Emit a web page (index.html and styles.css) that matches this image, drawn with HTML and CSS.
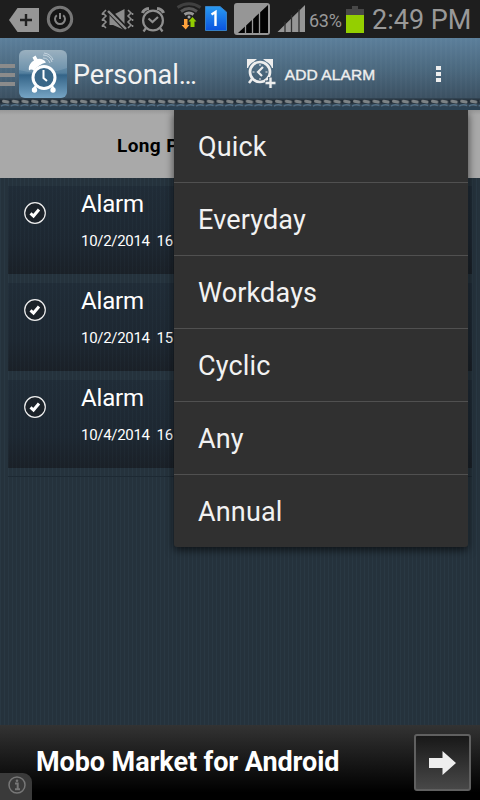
FILE: index.html
```html
<!DOCTYPE html>
<html lang="en">
<head>
<meta charset="utf-8">
<title>Personal Alarm</title>
<link rel="stylesheet" href="styles.css">
</head>
<body>
<div class="screen">
  <header class="status">
    <svg class="status-icons" width="308" height="38" viewBox="0 0 308 38">
      <path d="M9 20L17.500 8H39V32H17.500Z" fill="#969696"/>
      <path d="M20 20H32M26 14V26" stroke="#222" stroke-width="2.400"/>
      <circle cx="60" cy="19" r="11.700" fill="#151515" stroke="#777" stroke-width="3"/>
      <path d="M56.800 15.200A5 5 0 1 0 63.200 15.200M60 13V19" fill="none" stroke="#858585" stroke-width="2"/>
      <path d="M109.500 15H113L124.500 9V30L113 25H109.500Z" fill="#8c8c8c"/>
      <path d="M107 9L127 30" stroke="#1e1e1e" stroke-width="5"/>
      <path d="M108 11L126 29" stroke="#8c8c8c" stroke-width="2.400"/>
      <path d="M106 10L103 13L106 16L103 19L106 22L103 25L106 28M128 10L131 13L128 16L131 19L128 22L131 25L128 28M102.500 13V15M102.500 19V21M102.500 25V27M132.500 13V15M132.500 19V21M132.500 25V27" fill="none" stroke="#8c8c8c" stroke-width="1.600"/>
      <g fill="none" stroke="#8f8f8f" stroke-width="2.200">
        <circle cx="153" cy="20.500" r="9.900"/>
        <path d="M148.500 18.500L152.500 22L158 17M146 28L143.500 31.500M160 28L162.500 31.500"/>
        <path d="M142.500 13Q144 9 149 8.500M163.500 13Q162 9 157 8.500" stroke-width="3.200"/>
      </g>
      <g fill="none" stroke-width="3">
        <path d="M177.500 7.500Q189 0 200.500 7.500" stroke="#404040"/>
        <path d="M181 11.500Q189 5.500 197 11.500" stroke="#555"/>
        <path d="M184.500 14.500Q189 11.500 193.500 14.500" stroke="#969696"/>
      </g>
      <circle cx="189" cy="17" r="1.500" fill="#a5a5a5"/>
      <path d="M184 19H187.500V25H189.500L185.700 29.500L181.500 25H184Z" fill="#ffa23b"/>
      <path d="M190.500 27V21.500H188.500L192.500 17L196.500 21.500H194.500V27Z" fill="#92cc00"/>
      <defs><linearGradient id="sim" x2="0" y2="1"><stop stop-color="#299af0"/><stop offset="1" stop-color="#0a53e0"/></linearGradient></defs>
      <path d="M205.500 6.500H220L226.500 12V30.500H205.500Z" fill="url(#sim)" stroke="#367fc4"/>
      <path d="M211.500 14.500L215.500 12V26" fill="none" stroke="#fff" stroke-width="2.400"/>
      <rect x="234" y="3" width="36" height="32" rx="3" fill="#969696"/>
      <path d="M238 33L268 5V33Z" fill="#030303"/>
      <path d="M245.500 23V33M252.500 17V33M259.500 12V33" stroke="#999" stroke-width="1.300"/>
      <path d="M277.500 32L305 5V32Z" fill="#969696"/>
      <path d="M285 22V32M291.500 15V32M299 9V32" stroke="#303030" stroke-width="1.300"/>
    </svg>
    <span class="percent">63%</span>
    <svg class="battery" width="18" height="27" viewBox="0 0 18 27"><path d="M0 3H6V0H12V3H18V9H0Z" fill="#484848"/><path d="M0 9H18V27H0Z" fill="#94cf00"/></svg>
    <span class="clock">2:49 PM</span>
  </header>

  <div class="appbar">
    <div class="bar-main">
      <span class="drawer"><i></i><i></i><i></i></span>
      <svg class="logo" width="48" height="48" viewBox="0 0 48 48">
        <defs><linearGradient id="logo" x2="0" y2="1"><stop stop-color="#8da6b7"/><stop offset=".48" stop-color="#54809f"/><stop offset=".52" stop-color="#346488"/><stop offset="1" stop-color="#76a4c4"/></linearGradient></defs>
        <rect width="48" height="48" rx="6" fill="url(#logo)"/>
        <path d="M0 20Q24 27 48 18V6Q48 0 42 0H6Q0 0 0 6Z" fill="#fff" opacity=".12"/>
        <circle cx="25" cy="27.500" r="11" fill="#3a6788" stroke="#fff" stroke-width="3"/>
        <path d="M24.500 20V28L28 31" fill="none" stroke="#fff" stroke-width="2"/>
        <path d="M10 20.500C9 16 12 12 15 10.500L13.500 7.500L16.500 5.500L18.500 9Q24 8 27 12.500Q19 14.500 15 21Q12.500 18.500 10 20.500Z" fill="#fff"/>
        <circle cx="15.500" cy="40" r="2.700" fill="#fff"/><circle cx="34" cy="40" r="2.700" fill="#fff"/>
        <path d="M17 36L14 40M33 36L35 40" stroke="#fff" stroke-width="2.500"/>
        <path d="M24 8Q29 8 31 13M24 5Q31 5 33 12M25 3Q32 4 34 10" fill="none" stroke="#c5d4df" stroke-width="1"/>
      </svg>
      <h1 class="title">Personal…</h1>
      <button class="add">
        <svg width="30" height="31" viewBox="0 0 30 31" fill="none" stroke="#eee">
          <circle cx="14" cy="14" r="10" stroke-width="2.700"/>
          <path d="M17 9L12 14L16 18" stroke-width="2.200"/>
          <path d="M14 6V8M6.500 14H8.500M19.500 14H21.500M14 20V22" stroke-width="1"/>
          <path d="M1 1H11L8 3.500Q3.500 5.500 2 10H1ZM27 1H17L20 3.500Q24.500 5.500 26 10H27Z" fill="#eee" stroke="none"/>
          <path d="M6 21L3 25" stroke-width="2.500"/>
          <path d="M24.500 19V30M19 25H30" stroke="#4b6376" stroke-width="5"/>
          <path d="M24.500 19.500V30M19.500 25H29.500" stroke-width="2.400"/>
        </svg>
        <span>ADD ALARM</span>
      </button>
      <span class="overflow"><i></i><i></i><i></i></span>
    </div>
    <svg class="stitch" width="480" height="12">
      <defs><pattern id="thread" width="9.75" height="12" patternUnits="userSpaceOnUse">
        <rect width="9.75" height="12" fill="#314250"/>
        <path d="M0 3.500H9.750" stroke="#222d37" stroke-width="4"/>
        <path d="M3.500 3.200L7.800 4" fill="none" stroke="#7d8386" stroke-width="3" stroke-linecap="round"/>
        <path d="M1 8.200Q4 5.800 9 7.500" fill="none" stroke="#537087" stroke-width="1.500"/>
        <path d="M0 10.500H9.750" stroke="#2b4254" stroke-width="3"/>
      </pattern></defs>
      <rect width="480" height="12" fill="url(#thread)"/>
    </svg>
  </div>

  <main class="content">
    <div class="hint">Long P</div>
    <ul class="alarms">
      <li class="alarm"><svg class="check" width="22" height="22" viewBox="0 0 22 22"><circle cx="11" cy="11" r="10.300"/><path d="M6.500 11.300L9.500 14L15 7.500"/></svg><div><h2>Alarm</h2><p>10/2/2014&nbsp; 16</p></div></li>
      <li class="alarm"><svg class="check" width="22" height="22" viewBox="0 0 22 22"><circle cx="11" cy="11" r="10.300"/><path d="M6.500 11.300L9.500 14L15 7.500"/></svg><div><h2>Alarm</h2><p>10/2/2014&nbsp; 15</p></div></li>
      <li class="alarm"><svg class="check" width="22" height="22" viewBox="0 0 22 22"><circle cx="11" cy="11" r="10.300"/><path d="M6.500 11.300L9.500 14L15 7.500"/></svg><div><h2>Alarm</h2><p>10/4/2014&nbsp; 16</p></div></li>
    </ul>
    <div class="list-end"></div>
    <nav class="menu">
      <a>Quick</a><a>Everyday</a><a>Workdays</a><a>Cyclic</a><a>Any</a><a>Annual</a>
    </nav>
  </main>

  <footer class="ad">
    <strong>Mobo Market for Android</strong>
    <span class="go"><svg width="27" height="24" viewBox="0 0 27 24"><path d="M0 7H13.500V0L27 12L13.500 24V17H0Z" fill="#eee"/></svg></span>
    <span class="info"><svg width="18" height="18" viewBox="0 0 18 18"><circle cx="9" cy="9" r="8" fill="none" stroke="#777" stroke-width="1.500"/><path d="M7 7.500H9.700V13M7 13.300H12" fill="none" stroke="#777" stroke-width="2"/><circle cx="9" cy="4.700" r="1.300" fill="#777"/></svg></span>
  </footer>
</div>
</body>
</html>
```

FILE: styles.css
```css
* { box-sizing: border-box; }
body { margin: 0; font-family: Roboto, sans-serif; }
h1, h2, p, ul { margin: 0; padding: 0; font-weight: 400; }
.screen { width: 480px; height: 800px; display: flex; flex-direction: column; overflow: hidden; background: #24323d; }

.status { height: 38px; flex: none; display: flex; align-items: center; background: #1e1e1e; color: #999; white-space: nowrap; }
.status-icons { flex: none; }
.percent { width: 38px; padding: 2px 0 0 1px; font-size: 18px; letter-spacing: -.3px; }
.battery { flex: none; }
.clock { padding-left: 8px; font-size: 27px; letter-spacing: 0; padding-top: 1px; }

.appbar { height: 72px; flex: none; display: flex; flex-direction: column; border-bottom: 1px solid #71828d;
  background: repeating-linear-gradient(90deg, rgba(255,255,255,.018) 0 2px, transparent 2px 5px), linear-gradient(#5c7f9b, #4b687e 45%, #3b5061 85%, #2b4254); }
.bar-main { height: 60px; flex: none; display: flex; align-items: center; padding-top: 12px; }
.drawer { width: 15px; display: grid; gap: 5px; margin-top: 2px; }
.drawer i { height: 4px; background: #8b8b8b; }
.logo { margin-left: 4px; flex: none; }
.title { width: 172px; padding: 1px 0 0 6px; font-size: 27px; line-height: 48px; color: #f2f2f2; }
.add { display: flex; align-items: center; gap: 8px; margin-left: 7px; padding: 0; border: 0; background: none; font: 15.5px "Liberation Sans", sans-serif; color: #eee; white-space: nowrap; -webkit-text-stroke: .4px #eee; }
.add svg { margin-top: -1px; }
.add span { width: 92px; padding-top: 1px; letter-spacing: .1px; }
.overflow { display: grid; gap: 2px; margin-left: 60px; }
.overflow i { width: 5px; height: 4px; background: #eee; }
.stitch { display: block; flex: none; }

.content { position: relative; flex: 1; background: repeating-linear-gradient(90deg, rgba(90,130,150,.08) 0 1px, transparent 1px 4px), #25323c; }
.hint { height: 68px; padding-left: 117px; background: linear-gradient(#989898, #a9a9a9 5px, #a9a9a9); color: #000; font-size: 19px; font-weight: 700; line-height: 71px; letter-spacing: .4px; }
.alarms { display: grid; gap: 9px; padding: 8px 8px 0; list-style: none; }
.alarm { height: 88px; display: flex; color: #fff; background: repeating-linear-gradient(90deg, rgba(90,130,150,.05) 0 1px, transparent 1px 4px), linear-gradient(#202c37, #1d2731 65%, #1a2027); }
.check { flex: none; margin: 16px 35px 0 16px; fill: #1b2229; stroke: #eee; stroke-width: 1.200; }
.check path { fill: none; stroke: #fff; stroke-width: 3; }
.alarm h2 { padding-top: 3px; font-size: 24px; line-height: 30px; letter-spacing: -.15px; }
.alarm p { margin-top: 12px; font-size: 15px; line-height: 20px; letter-spacing: -.3px; }
.list-end { height: 1px; margin: 8px 8px 0; background: #1d2933; }
.menu { position: absolute; top: 0; left: 174px; width: 294px; height: 437px; background: #303030; border-radius: 0 0 3px 3px; box-shadow: 0 3px 8px rgba(0,0,0,.65); clip-path: inset(0 -12px -16px -12px); }
.menu a { display: block; height: 73px; padding-left: 24px; font-size: 27px; line-height: 75px; letter-spacing: .15px; color: #f2f2f2; border-bottom: 1px solid #505050; }
.menu a:last-child { border: 0; }

.ad { position: relative; height: 75px; flex: none; display: flex; align-items: center; justify-content: space-between; padding: 0 9px 0 36px; color: #fff; background: linear-gradient(#333, #000 90%); }
.ad strong { font-size: 27px; letter-spacing: -.08px; padding-bottom: 2px; white-space: nowrap; }
.go { width: 57px; height: 57px; display: grid; place-items: center; border: 2px solid #606060; border-radius: 3px; background: linear-gradient(#181818, #484848); }
.info { position: absolute; left: 0; bottom: 0; width: 32px; height: 27px; padding: 3px 0 0 8px; background: #3a3a3a; border-radius: 0 9px 0 0; }
.info svg { display: block; }
```
